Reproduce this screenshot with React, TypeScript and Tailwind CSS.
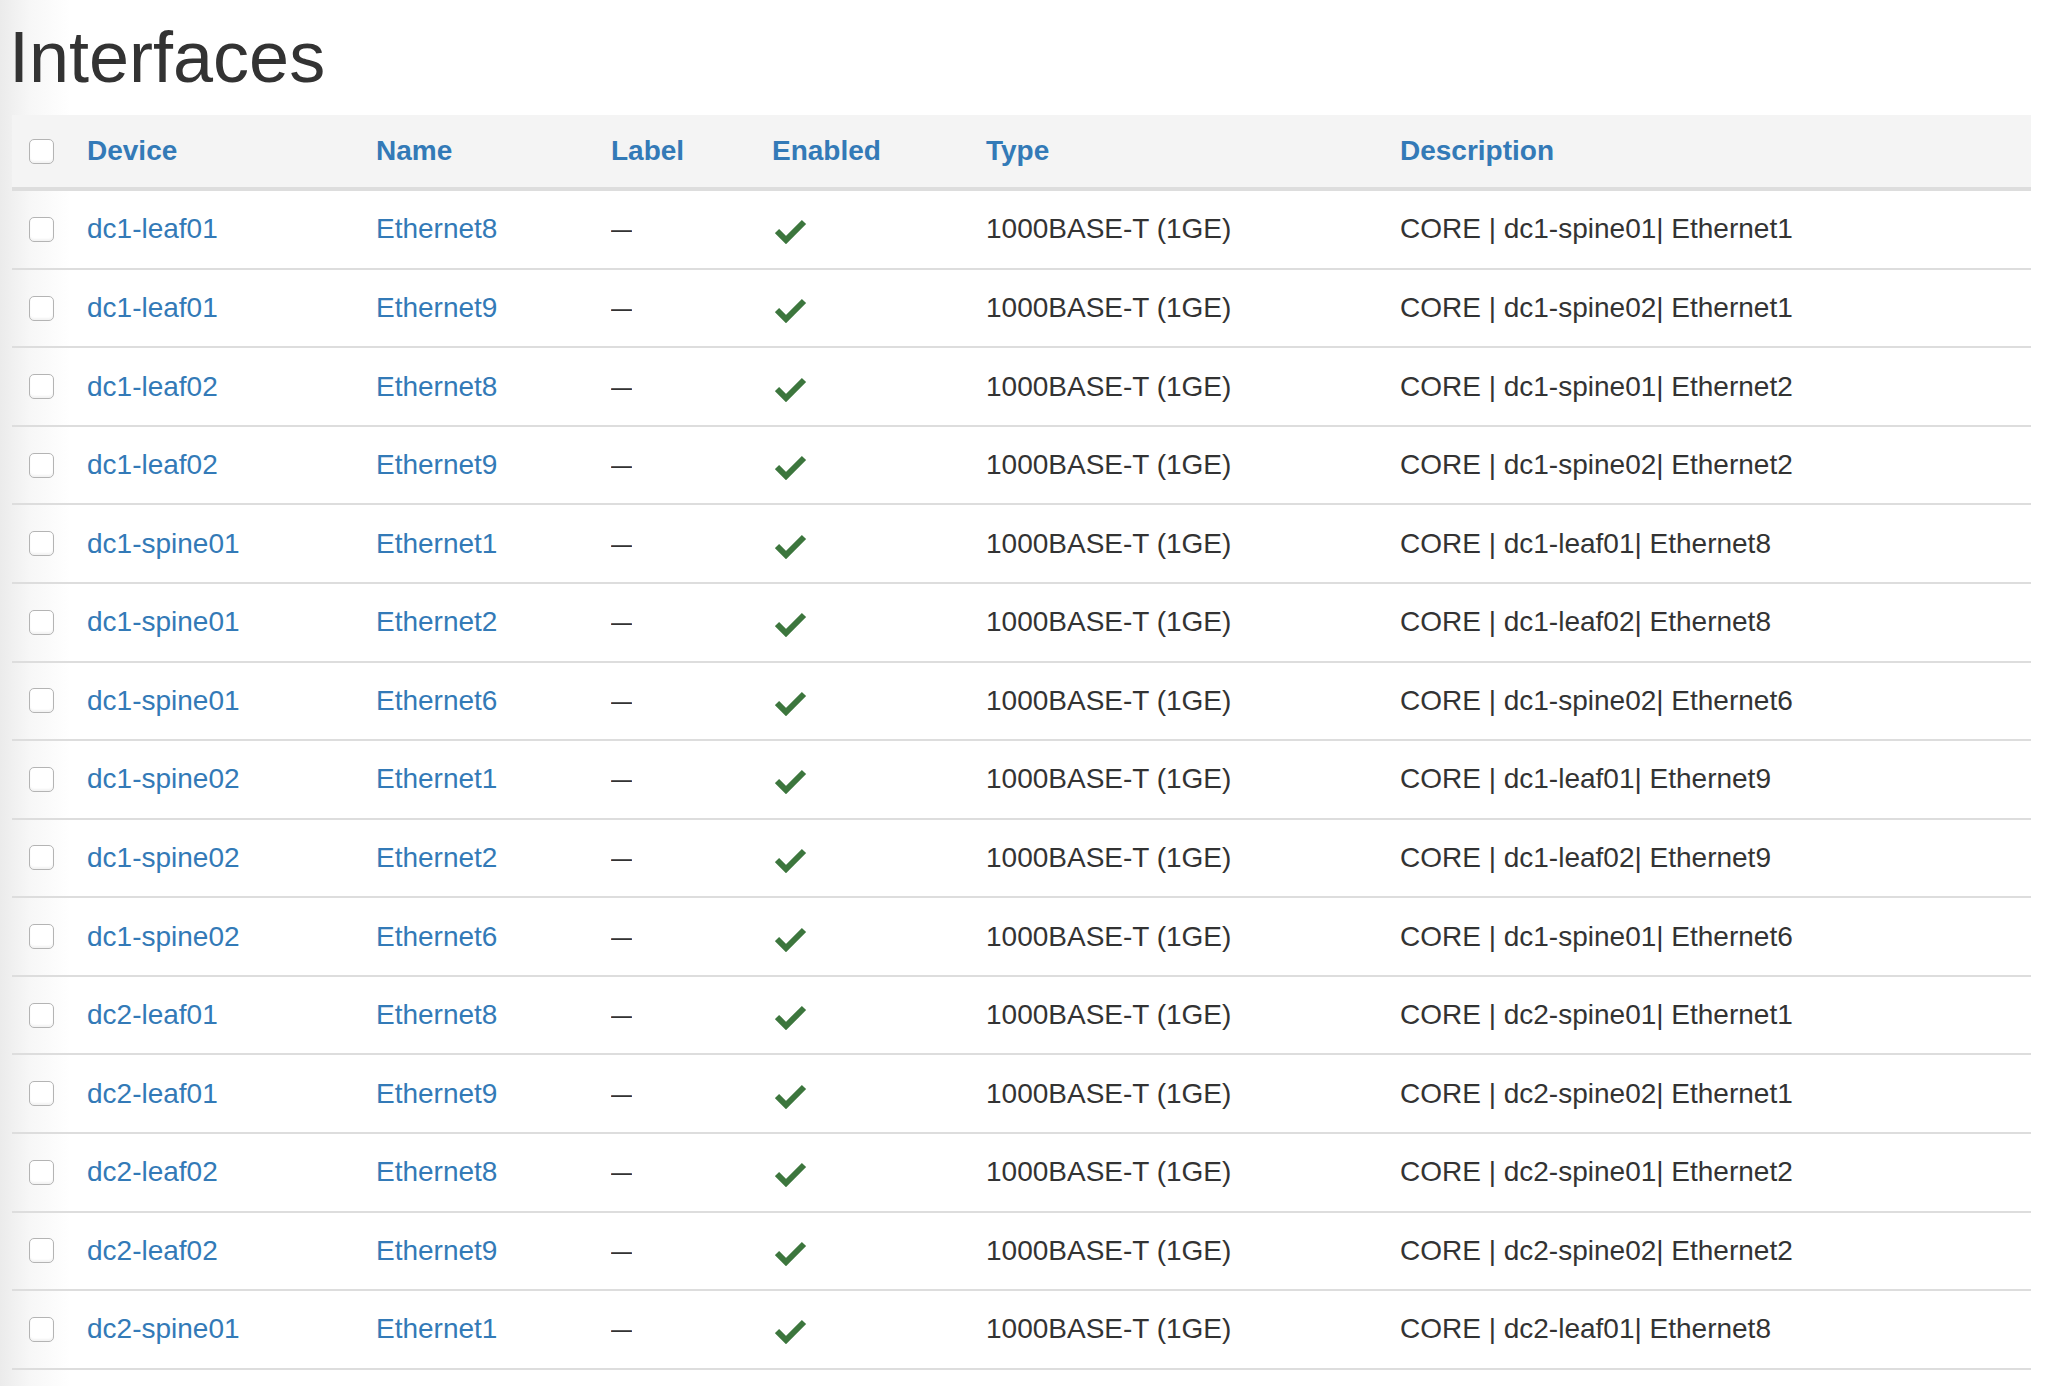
import React from 'react';

type Iface = { device: string; name: string; description: string };

const rows: Iface[] = [
  { device: 'dc1-leaf01', name: 'Ethernet8', description: 'CORE | dc1-spine01| Ethernet1' },
  { device: 'dc1-leaf01', name: 'Ethernet9', description: 'CORE | dc1-spine02| Ethernet1' },
  { device: 'dc1-leaf02', name: 'Ethernet8', description: 'CORE | dc1-spine01| Ethernet2' },
  { device: 'dc1-leaf02', name: 'Ethernet9', description: 'CORE | dc1-spine02| Ethernet2' },
  { device: 'dc1-spine01', name: 'Ethernet1', description: 'CORE | dc1-leaf01| Ethernet8' },
  { device: 'dc1-spine01', name: 'Ethernet2', description: 'CORE | dc1-leaf02| Ethernet8' },
  { device: 'dc1-spine01', name: 'Ethernet6', description: 'CORE | dc1-spine02| Ethernet6' },
  { device: 'dc1-spine02', name: 'Ethernet1', description: 'CORE | dc1-leaf01| Ethernet9' },
  { device: 'dc1-spine02', name: 'Ethernet2', description: 'CORE | dc1-leaf02| Ethernet9' },
  { device: 'dc1-spine02', name: 'Ethernet6', description: 'CORE | dc1-spine01| Ethernet6' },
  { device: 'dc2-leaf01', name: 'Ethernet8', description: 'CORE | dc2-spine01| Ethernet1' },
  { device: 'dc2-leaf01', name: 'Ethernet9', description: 'CORE | dc2-spine02| Ethernet1' },
  { device: 'dc2-leaf02', name: 'Ethernet8', description: 'CORE | dc2-spine01| Ethernet2' },
  { device: 'dc2-leaf02', name: 'Ethernet9', description: 'CORE | dc2-spine02| Ethernet2' },
  { device: 'dc2-spine01', name: 'Ethernet1', description: 'CORE | dc2-leaf01| Ethernet8' },
];

const GRID = 'grid grid-cols-[58px_289px_235px_161px_214px_414px_1fr] items-center';
const CELL = 'pl-[17px] whitespace-nowrap';

const Checkbox: React.FC = () => (
  <input
    type="checkbox"
    className="block appearance-none w-[25px] h-[25px] rounded-[5px] border border-[#b4b4b4] bg-white shadow-[inset_0_-2px_2px_rgba(0,0,0,0.05)]"
  />
);

// glyphicon-ok style check mark
const Check: React.FC = () => (
  <svg width="32" height="26" viewBox="0 0 32 26" className="ml-[3px] translate-y-[2px]">
    <polyline points="2,13 11,22 29,4" fill="none" stroke="#3c763d" strokeWidth="6" strokeLinejoin="miter" />
  </svg>
);

export default function App() {
  return (
    <div
      className="min-h-screen bg-[linear-gradient(to_right,#ebebeb_0px,#f7f7f7_30px,#ffffff_70px)] text-[#333] text-[28px]"
      style={{ fontFamily: '"Liberation Sans", Arial, sans-serif' }}
    >
      <h1 className="pt-[18px] pl-[9px] mb-[18px] text-[72px] leading-[1.1] font-normal">Interfaces</h1>

      <div className="ml-[12px] w-[2019px]">
        {/* Header */}
        <div className={`${GRID} h-[76px] bg-[#f4f4f4] border-b-4 border-[#dddddd] font-bold text-[#337ab7]`}>
          <div className={CELL}><Checkbox /></div>
          <div className={CELL}>Device</div>
          <div className={CELL}>Name</div>
          <div className={CELL}>Label</div>
          <div className={CELL}>Enabled</div>
          <div className={CELL}>Type</div>
          <div className={CELL}>Description</div>
        </div>

        {/* Rows */}
        {rows.map((r, i) => (
          <div key={i} className={`${GRID} h-[78.57px] border-b-2 border-[#dddddd]`}>
            <div className={CELL}><Checkbox /></div>
            <div className={`${CELL} text-[#337ab7]`}>{r.device}</div>
            <div className={`${CELL} text-[#337ab7]`}>{r.name}</div>
            <div className={CELL}>
              <span className="inline-block scale-x-75 origin-left">—</span>
            </div>
            <div className={CELL}><Check /></div>
            <div className={CELL}>1000BASE-T (1GE)</div>
            <div className={CELL}>{r.description}</div>
          </div>
        ))}
      </div>
    </div>
  );
}
